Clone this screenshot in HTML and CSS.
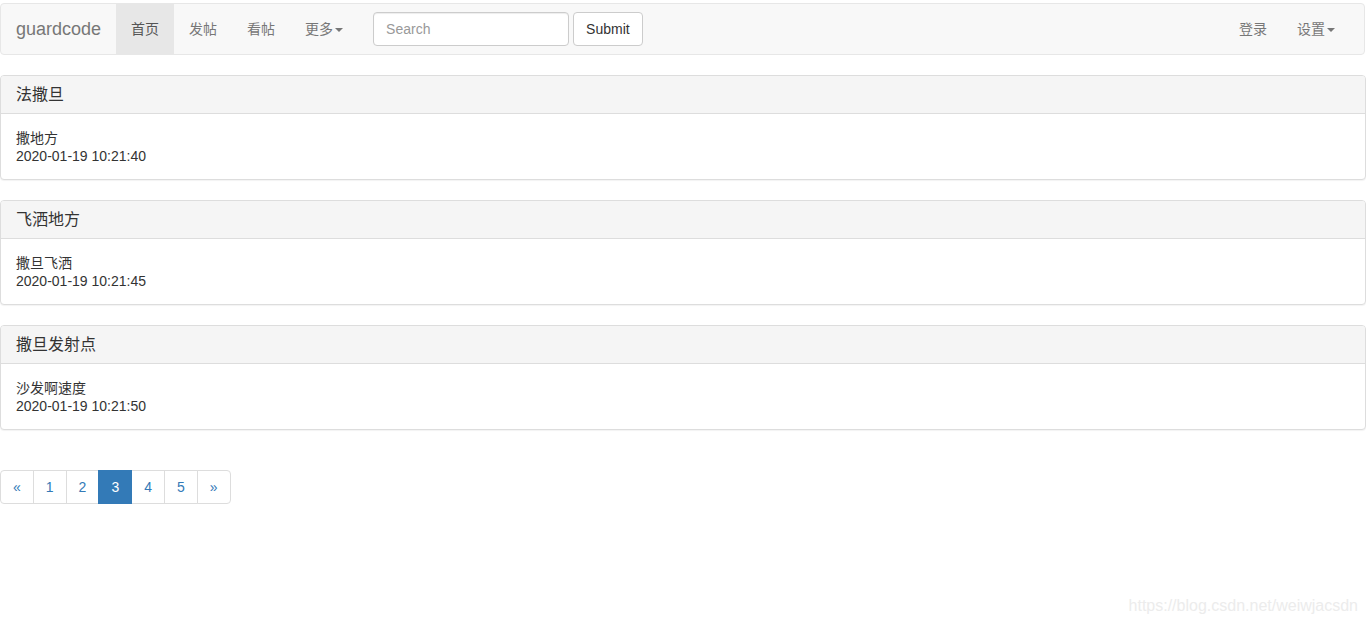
FILE: index.html
```html
<!DOCTYPE html>
<html lang="zh">
<head>
<meta charset="utf-8">
<title>guardcode</title>
<link rel="stylesheet" href="styles.css">
</head>
<body>
<nav class="navbar">
  <div class="nav-left">
    <a class="brand" href="#">guardcode</a>
    <ul class="nav">
      <li class="active"><a href="#">首页</a></li>
      <li><a href="#">发帖</a></li>
      <li><a href="#">看帖</a></li>
      <li><a href="#">更多<span class="caret"></span></a></li>
    </ul>
    <form class="nav-form">
      <input class="search" type="text" placeholder="Search">
      <button class="btn" type="button">Submit</button>
    </form>
  </div>
  <ul class="nav nav-right">
    <li><a href="#">登录</a></li>
    <li><a href="#">设置<span class="caret"></span></a></li>
  </ul>
</nav>

<div class="panel">
  <div class="panel-heading">法撒旦</div>
  <div class="panel-body">
    <div class="line">撒地方</div>
    <div class="line">2020-01-19 10:21:40</div>
  </div>
</div>

<div class="panel">
  <div class="panel-heading">飞洒地方</div>
  <div class="panel-body">
    <div class="line">撒旦飞洒</div>
    <div class="line">2020-01-19 10:21:45</div>
  </div>
</div>

<div class="panel">
  <div class="panel-heading">撒旦发射点</div>
  <div class="panel-body">
    <div class="line">沙发啊速度</div>
    <div class="line">2020-01-19 10:21:50</div>
  </div>
</div>

<ul class="pagination">
  <li><a href="#">&laquo;</a></li>
  <li><a href="#">1</a></li>
  <li><a href="#">2</a></li>
  <li class="active"><a href="#">3</a></li>
  <li><a href="#">4</a></li>
  <li><a href="#">5</a></li>
  <li><a href="#">&raquo;</a></li>
</ul>

<div class="watermark">https://blog.csdn.net/weiwjacsdn</div>
</body>
</html>
```

FILE: styles.css
```css
* { box-sizing: border-box; }
html, body { margin: 0; padding: 0; }
body {
  font-family: "Liberation Sans", Arial, "Noto Sans CJK SC", sans-serif;
  font-size: 14px;
  line-height: 1.42857;
  color: #333;
  background: #fff;
  padding-top: 3px;
  height: 624px;
  overflow: hidden;
  position: relative;
}
a { text-decoration: none; }

.navbar {
  display: flex;
  justify-content: space-between;
  align-items: stretch;
  min-height: 52px;
  background: #f8f8f8;
  border: 1px solid #e7e7e7;
  border-radius: 4px;
  margin-right: 1px;
  margin-bottom: 20px;
}
.nav-left { display: flex; align-items: stretch; }
.brand {
  display: block;
  padding: 15px 15px;
  height: 50px;
  font-size: 18px;
  line-height: 20px;
  color: #777;
}
.nav {
  display: flex;
  list-style: none;
  margin: 0;
  padding: 0;
}
.nav li a {
  display: block;
  padding: 15px 15px;
  line-height: 20px;
  color: #777;
}
.nav li.active a { background: #e7e7e7; color: #555; }
.nav-right { margin-right: 14px; }
.caret {
  display: inline-block;
  width: 0;
  height: 0;
  margin-left: 2px;
  vertical-align: middle;
  border-top: 4px dashed #777;
  border-right: 4px solid transparent;
  border-left: 4px solid transparent;
}
.nav-form {
  display: flex;
  align-items: center;
  gap: 4px;
  padding: 8px 15px;
  margin: 0;
}
.search {
  width: 196px;
  height: 34px;
  padding: 6px 12px;
  font-family: inherit;
  font-size: 14px;
  color: #555;
  background: #fff;
  border: 1px solid #ccc;
  border-radius: 4px;
  box-shadow: inset 0 1px 1px rgba(0,0,0,.075);
  outline: none;
}
.search::placeholder { color: #999; }
.btn {
  height: 34px;
  padding: 6px 12px;
  font-family: inherit;
  font-size: 14px;
  line-height: 20px;
  color: #333;
  background: #fff;
  border: 1px solid #ccc;
  border-radius: 4px;
}

.panel {
  margin-bottom: 20px;
  background: #fff;
  border: 1px solid #ddd;
  border-radius: 4px;
  box-shadow: 0 1px 1px rgba(0,0,0,.05);
}
.panel-heading {
  padding: 10px 15px;
  font-size: 16px;
  line-height: 17px;
  color: #333;
  background: #f5f5f5;
  border-bottom: 1px solid #ddd;
  border-radius: 3px 3px 0 0;
}
.panel-body {
  padding: 16px 15px 14px;
}
.panel-body .line {
  line-height: 17.5px;
}

.pagination {
  display: flex;
  list-style: none;
  margin: 40px 0 20px;
  padding: 0;
}
.pagination li a {
  display: block;
  padding: 6px 12px;
  line-height: 20px;
  color: #337ab7;
  background: #fff;
  border: 1px solid #ddd;
  margin-left: -1px;
}
.pagination li:first-child a { margin-left: 0; border-radius: 4px 0 0 4px; }
.pagination li:last-child a { border-radius: 0 4px 4px 0; }
.pagination li.active a {
  color: #fff;
  background: #337ab7;
  border-color: #337ab7;
  position: relative;
  z-index: 2;
}

.watermark {
  position: absolute;
  right: 8px;
  bottom: 6px;
  font-size: 16px;
  color: #ececec;
}
```
